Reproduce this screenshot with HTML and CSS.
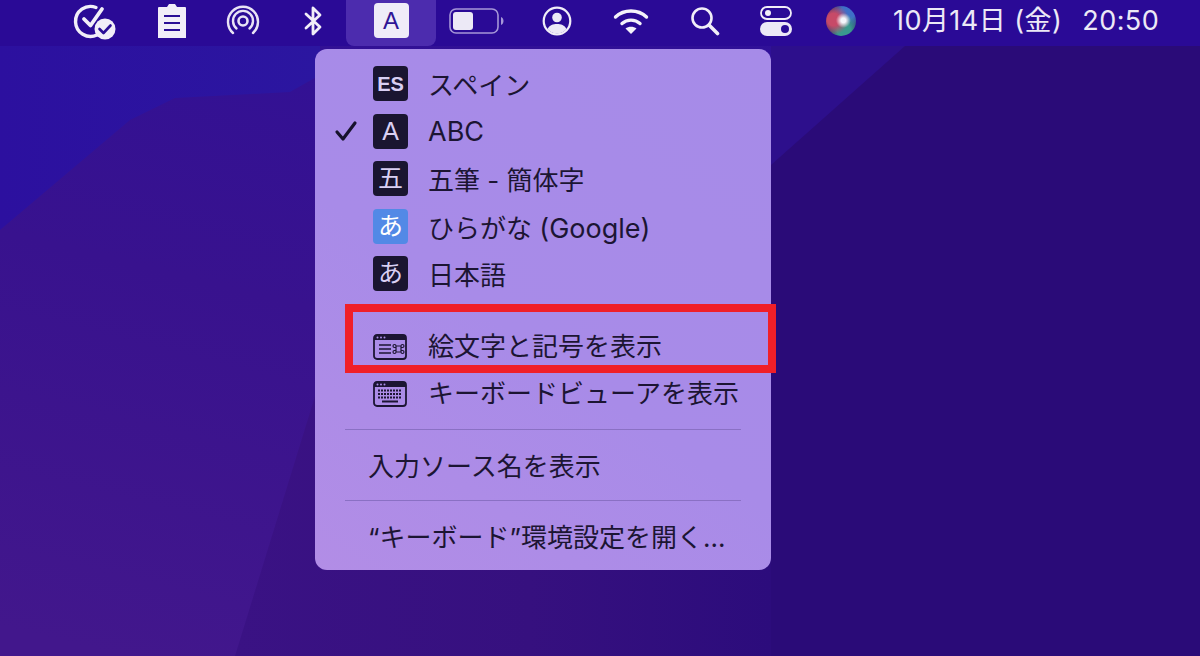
FILE: index.html
```html
<!DOCTYPE html>
<html lang="ja">
<head>
<meta charset="utf-8">
<title>入力ソースメニュー</title>
<link rel="stylesheet" href="styles.css">
</head>
<body>
<div class="desktop">
  <svg class="wallpaper" viewBox="0 0 1200 656" preserveAspectRatio="none" aria-hidden="true">
    <defs>
      <linearGradient id="wpA" x1="0.55" y1="0" x2="0.1" y2="1">
        <stop offset="0" stop-color="#2f1098"/>
        <stop offset="0.5" stop-color="#38128e"/>
        <stop offset="1" stop-color="#42178c"/>
      </linearGradient>
      <linearGradient id="wpTop" x1="0" y1="0" x2="1" y2="0">
        <stop offset="0" stop-color="#2c109f"/>
        <stop offset="1" stop-color="#2b16a0"/>
      </linearGradient>
      <linearGradient id="wpBelow" x1="0" y1="0" x2="1" y2="0">
        <stop offset="0" stop-color="#3a1284"/>
        <stop offset="0.55" stop-color="#36107f"/>
        <stop offset="1" stop-color="#2c0c7c"/>
      </linearGradient>
    </defs>
    <rect width="1200" height="656" fill="url(#wpA)"/>
    <polygon points="0,46 320,46 320,75 290,92 175,98 130,120 0,230" fill="url(#wpTop)"/>
    <polygon points="320,380 771,380 771,656 235,656" fill="url(#wpBelow)"/>
    <polygon points="771,40 1200,40 1200,656 771,656" fill="#2a0b78"/>
    <polygon points="771,40 905,46 771,165" fill="#2d0f8c"/>
  </svg>

  <header class="menubar">
    <span class="bar-item w-check">
      <svg width="46" height="40" viewBox="0 0 46 40"><g fill="none" stroke="#f1eef8" stroke-linecap="round" stroke-linejoin="round"><path d="M24 6.500A15 15 0 1 0 25 34" stroke-width="3.400"/><path d="M12 18l6.500 6.500L30 8" stroke-width="3.800"/></g><circle cx="33" cy="28" r="10.500" fill="#f1eef8"/><path d="M27.500 28l4 4 7-7.500" fill="none" stroke="#2a0e96" stroke-width="2.600" stroke-linecap="round" stroke-linejoin="round"/></svg>
    </span>
    <span class="bar-item w-clip">
      <svg width="32" height="36" viewBox="0 0 32 36"><path d="M2 5a1 1 0 0 1 1-1h8l2-3h6l2 3h8a1 1 0 0 1 1 1v30H2z" fill="#f1eef8"/><path d="M8 13h16M8 20h16M8 27h16" stroke="#2a0e96" stroke-width="2.200"/></svg>
    </span>
    <span class="bar-item w-air">
      <svg width="34" height="34" viewBox="0 0 34 34"><g fill="none" stroke="#e8e3f5" stroke-linecap="round"><path d="M7 29A15 15 0 1 1 27 29" stroke-width="2.400"/><path d="M10.500 24.500A10 10 0 1 1 23.500 24.500" stroke-width="2.400"/><circle cx="17" cy="17" r="4.500" stroke-width="2.600"/></g></svg>
    </span>
    <span class="bar-item w-bt">
      <svg width="20" height="32" viewBox="0 0 20 32"><path d="M3 9l14 13-7 7V3l7 7L3 23" fill="none" stroke="#f1eef8" stroke-width="2.800" stroke-linecap="round" stroke-linejoin="round"/></svg>
    </span>
    <span class="bar-item bar-active"><span class="input-badge">A</span></span>
    <span class="bar-item w-battery">
      <svg width="56" height="28" viewBox="0 0 56 28"><rect x="1" y="2" width="48" height="24" rx="6" fill="none" stroke="#a697d8" stroke-width="1.600"/><rect x="4" y="5" width="20" height="18" rx="3" fill="#ece9f6"/><path d="M52 10c2 1 2.500 2.500 2.500 4s-.5 3-2.500 4z" fill="#a697d8"/></svg>
    </span>
    <span class="bar-item w-user">
      <svg width="30" height="30" viewBox="0 0 30 30"><circle cx="15" cy="15" r="13.300" fill="none" stroke="#f1eef8" stroke-width="2.200"/><circle cx="15" cy="11.500" r="4.800" fill="#ece9f6"/><path d="M5.500 23c2-4 5.500-5 9.500-5s7.500 1 9.500 5c-2.500 3-6 4.500-9.500 4.500S8 26 5.500 23z" fill="#ece9f6"/></svg>
    </span>
    <span class="bar-item w-wifi">
      <svg width="36" height="28" viewBox="0 0 36 28"><g fill="none" stroke="#f4f2fa" stroke-width="3.400" stroke-linecap="round"><path d="M2.500 10C11 2 25 2 33.500 10"/><path d="M9 16.500c5-4.500 13-4.500 18 0"/></g><path d="M12.500 21.500c3-2.500 8-2.500 11 0L18 27z" fill="#f4f2fa"/></svg>
    </span>
    <span class="bar-item w-search">
      <svg width="30" height="30" viewBox="0 0 30 30"><g fill="none" stroke="#f1eef8" stroke-linecap="round"><circle cx="12" cy="12" r="9.500" stroke-width="2.600"/><path d="M19 19l8.500 8.500" stroke-width="3.600"/></g></svg>
    </span>
    <span class="bar-item w-toggle">
      <svg width="32" height="30" viewBox="0 0 32 30"><rect x="1" y="1" width="30" height="12" rx="6" fill="none" stroke="#f1eef8" stroke-width="1.800"/><circle cx="8" cy="7" r="3" fill="#f1eef8"/><rect y="16" width="32" height="14" rx="7" fill="#ece9f6"/><circle cx="25" cy="23" r="4" fill="#2a0e96"/></svg>
    </span>
    <span class="bar-item w-siri"><span class="siri"></span></span>
    <span class="clock"><span>10月14日 (金)</span><span>20:50</span></span>
  </header>

  <nav class="menu">
    <div class="menu-row">
      <span class="check"></span><span class="src-icon latin-bold">ES</span><span>スペイン</span>
    </div>
    <div class="menu-row">
      <span class="check"><svg width="24" height="24" viewBox="0 0 24 24"><path d="M3 13l6 7L21 4" fill="none" stroke="#17122c" stroke-width="3.200" stroke-linecap="round" stroke-linejoin="round"/></svg></span><span class="src-icon">A</span><span class="latin">ABC</span>
    </div>
    <div class="menu-row">
      <span class="check"></span><span class="src-icon">五</span><span>五筆 - 簡体字</span>
    </div>
    <div class="menu-row">
      <span class="check"></span><span class="src-icon src-blue">あ</span><span>ひらがな <span class="latin">(Google)</span></span>
    </div>
    <div class="menu-row">
      <span class="check"></span><span class="src-icon">あ</span><span>日本語</span>
    </div>
    <div class="menu-gap"></div>
    <div class="menu-row">
      <span class="check"></span>
      <svg class="win-icon" width="34" height="26" viewBox="0 0 34 26"><rect x="1" y="1" width="32" height="24" rx="3" fill="none" stroke="#1c1533" stroke-width="1.800"/><path d="M3 1h28a2 2 0 0 1 2 2v3H1V3a2 2 0 0 1 2-2z" fill="#1c1533"/><circle cx="4.500" cy="3.500" r="1" fill="#ab8fea"/><circle cx="8" cy="3.500" r="1" fill="#ab8fea"/><circle cx="11.500" cy="3.500" r="1" fill="#ab8fea"/><path d="M6 11h12M6 15h12M6 19h12" stroke="#1c1533" stroke-width="1.500"/><path d="M23 12h5v6h-5zM23 12a1.500 1.500 0 1 0-1.500 1.500H23M28 12a1.500 1.500 0 1 1 1.500 1.500H28M23 18a1.500 1.500 0 1 1-1.500-1.500H23M28 18a1.500 1.500 0 1 0 1.500-1.500H28" fill="none" stroke="#1c1533" stroke-width="1.200"/></svg>
      <span>絵文字と記号を表示</span>
    </div>
    <div class="menu-row">
      <span class="check"></span>
      <svg class="win-icon" width="34" height="26" viewBox="0 0 34 26"><rect x="1" y="1" width="32" height="24" rx="3" fill="none" stroke="#1c1533" stroke-width="1.800"/><path d="M3 1h28a2 2 0 0 1 2 2v3H1V3a2 2 0 0 1 2-2z" fill="#1c1533"/><circle cx="4.500" cy="3.500" r="1" fill="#ab8fea"/><circle cx="8" cy="3.500" r="1" fill="#ab8fea"/><circle cx="11.500" cy="3.500" r="1" fill="#ab8fea"/><path d="M5 9.500h24M5 13h24M5 16.500h24" stroke="#1c1533" stroke-width="2" stroke-dasharray="2 1"/><path d="M9 20.500h16" stroke="#1c1533" stroke-width="2"/></svg>
      <span>キーボードビューアを表示</span>
    </div>
    <div class="menu-sep menu-sep-first"></div>
    <div class="menu-row menu-plain">入力ソース名を表示</div>
    <div class="menu-sep"></div>
    <div class="menu-row menu-plain">“キーボード”環境設定を開く...</div>
  </nav>

  <div class="highlight-box"></div>
</div>
</body>
</html>
```
FILE: styles.css
```css
* { box-sizing: border-box; }
html, body { margin: 0; padding: 0; }
body { width: 1200px; height: 656px; overflow: hidden; background: #2a0e86; font-family: Inter, "Noto Sans CJK JP", sans-serif; }
.desktop { position: relative; width: 1200px; height: 656px; overflow: hidden; }
.wallpaper { position: absolute; inset: 0; width: 1200px; height: 656px; display: block; }
.menubar { position: relative; height: 46px; display: flex; align-items: center; padding-left: 57px; background: #2a0a96; color: #f4f2fa; }
.bar-item { height: 46px; padding-bottom: 4px; display: flex; align-items: center; justify-content: center; flex: none; }
.w-check { width: 76px; }
.w-clip { width: 78px; }
.w-air { width: 64px; }
.w-bt { width: 71px; padding-left: 5px; }
.bar-active { width: 90px; padding-bottom: 5px; background: #4c2cae; border-radius: 0 0 8px 8px; }
.input-badge { width: 35px; height: 35px; border-radius: 4px; background: #efecf8; color: #2f1696; display: flex; align-items: center; justify-content: center; font-size: 24px; font-family: "Liberation Sans", sans-serif; }
.w-battery { width: 82px; }
.w-user { width: 78px; }
.w-wifi { width: 70px; }
.w-search { width: 78px; }
.w-toggle { width: 64px; }
.w-siri { width: 66px; }
.siri { width: 30px; height: 30px; border-radius: 50%; background: radial-gradient(circle at 58% 48%, #f4f6fb 0 10%, transparent 32%), radial-gradient(circle at 25% 45%, #c74a68 0 22%, transparent 55%), radial-gradient(circle at 60% 82%, #3a9a8e 0 22%, transparent 55%), radial-gradient(circle at 72% 22%, #3f6fc8 0 22%, transparent 55%), #2c2c60; }
.clock { margin-left: 19px; padding-bottom: 10px; display: flex; gap: 20px; align-items: baseline; font-size: 27px; letter-spacing: .45px; white-space: nowrap; color: #ece9f6; }
.menu { position: absolute; left: 315px; top: 49px; width: 456px; height: 521px; padding-top: 11px; border-radius: 12px; background: linear-gradient(35deg, #b28de6 0%, #a88be8 45%, #a68be8 100%); color: #1c1533; font-size: 26px; }
.menu-row { height: 47.500px; display: flex; align-items: center; white-space: nowrap; }
.latin { font-size: 27px; }
.check { width: 58px; flex: none; display: flex; justify-content: center; padding-left: 3px; }
.src-icon { width: 35px; height: 35px; margin-right: 20px; flex: none; border-radius: 4px; background: #1a1530; color: #d9cff3; display: flex; align-items: center; justify-content: center; font-size: 25px; line-height: 1; font-family: "Liberation Sans", "Noto Sans CJK JP", sans-serif; }
.latin-bold { font-size: 20px; font-weight: 700; }
.src-blue { background: #5289e6; color: #fff; }
.menu-gap { height: 23px; }
.win-icon { margin-right: 21px; flex: none; margin-top: 5px; }
.menu-sep { height: 1px; margin: 12px 30px 11px 30px; background: #8a70c4; }
.menu-sep-first { margin-top: 13px; }
.menu-plain { padding-left: 53px; }
.highlight-box { position: absolute; left: 345px; top: 304px; width: 431px; height: 69px; border: 8px solid #f01f28; }
```
